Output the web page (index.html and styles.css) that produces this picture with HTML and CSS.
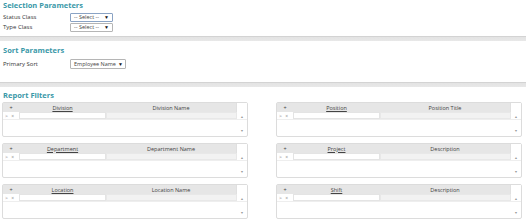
FILE: index.html
```html
<!DOCTYPE html>
<html lang="en">
<head>
  <meta charset="UTF-8" />
  <title>Report Parameters</title>
  <link rel="stylesheet" href="styles.css">
</head>
<body>
  <div class="section sel">
    <h3>Selection Parameters</h3>
    <div class="field">
      <label>Status Class</label>
      <div class="dd focus">-- Select -- <span class="arr">&#9660;</span></div>
    </div>
    <div class="field">
      <label>Type Class</label>
      <div class="dd">-- Select -- <span class="arr">&#9660;</span></div>
    </div>
  </div>
  <div class="band"></div>

  <div class="section sort">
    <h3>Sort Parameters</h3>
    <div class="field">
      <label>Primary Sort</label>
      <div class="dd wide">Employee Name <span class="arr">&#9660;</span></div>
    </div>
  </div>
  <div class="band"></div>

  <div class="section filters">
    <h3>Report Filters</h3>
    <div class="grids">
      <div class="grid">
        <div class="hdr"><span class="c-plus">+</span><span class="c-code"><u>Division</u></span><span class="c-name">Division Name</span><span class="c-sb"></span></div>
        <div class="row"><span class="c-plus">&gt; &#215;</span><span class="c-code in"></span><span class="c-name ro"></span><span class="c-sb up">&#9650;</span></div>
        <div class="rest"><span class="dn">&#9660;</span></div>
      </div>
      <div class="grid">
        <div class="hdr"><span class="c-plus">+</span><span class="c-code"><u>Position</u></span><span class="c-name">Position Title</span><span class="c-sb"></span></div>
        <div class="row"><span class="c-plus">&gt; &#215;</span><span class="c-code in"></span><span class="c-name ro"></span><span class="c-sb up">&#9650;</span></div>
        <div class="rest"><span class="dn">&#9660;</span></div>
      </div>
      <div class="grid">
        <div class="hdr"><span class="c-plus">+</span><span class="c-code"><u>Department</u></span><span class="c-name">Department Name</span><span class="c-sb"></span></div>
        <div class="row"><span class="c-plus">&gt; &#215;</span><span class="c-code in"></span><span class="c-name ro"></span><span class="c-sb up">&#9650;</span></div>
        <div class="rest"><span class="dn">&#9660;</span></div>
      </div>
      <div class="grid">
        <div class="hdr"><span class="c-plus">+</span><span class="c-code"><u>Project</u></span><span class="c-name">Description</span><span class="c-sb"></span></div>
        <div class="row"><span class="c-plus">&gt; &#215;</span><span class="c-code in"></span><span class="c-name ro"></span><span class="c-sb up">&#9650;</span></div>
        <div class="rest"><span class="dn">&#9660;</span></div>
      </div>
      <div class="grid">
        <div class="hdr"><span class="c-plus">+</span><span class="c-code"><u>Location</u></span><span class="c-name">Location Name</span><span class="c-sb"></span></div>
        <div class="row"><span class="c-plus">&gt; &#215;</span><span class="c-code in"></span><span class="c-name ro"></span><span class="c-sb up">&#9650;</span></div>
        <div class="rest"><span class="dn">&#9660;</span></div>
      </div>
      <div class="grid">
        <div class="hdr"><span class="c-plus">+</span><span class="c-code"><u>Shift</u></span><span class="c-name">Description</span><span class="c-sb"></span></div>
        <div class="row"><span class="c-plus">&gt; &#215;</span><span class="c-code in"></span><span class="c-name ro"></span><span class="c-sb up">&#9650;</span></div>
        <div class="rest"><span class="dn">&#9660;</span></div>
      </div>
    </div>
  </div>
</body>
</html>
```

FILE: styles.css
```css
body {
  margin: 0;
  font-family: 'Open Sans', sans-serif;
  font-size: 6px;
  color: #333;
  background: white;
  width: 526px;
  overflow: hidden;
}
h3 {
  margin: 0;
  font-size: 7.5px;
  font-weight: 700;
  color: #3a98a8;
  line-height: 9px;
}
.section {
  padding: 1px 3px 0;
}
.sel {
  height: 35px;
}
.sel h3 {
  margin-bottom: 2px;
}
.sort {
  height: 36px;
  padding-top: 5px;
}
.sort h3 {
  margin-bottom: 4px;
}
.filters {
  padding: 4px 2px 0;
}
.filters h3 {
  margin-left: 1px;
  margin-bottom: 2px;
}
.field {
  display: flex;
  align-items: center;
  height: 10px;
}
.field label {
  width: 67px;
  color: #333;
}
.dd {
  box-sizing: border-box;
  width: 43px;
  height: 9px;
  border: 1px solid #b5b5b5;
  border-radius: 1px;
  padding: 0 3px 0 3px;
  display: flex;
  align-items: center;
  justify-content: space-between;
  white-space: nowrap;
  font-size: 5.5px;
  color: #444;
  background: white;
}
.dd.focus {
  border-color: #8aa3c4;
}
.dd.wide {
  width: 56px;
  height: 10px;
}
.arr {
  font-size: 5px;
  color: #111;
  margin-left: 2px;
}
.band {
  height: 5px;
  background: linear-gradient(#d3d3d3 0, #d3d3d3 1px, #e3e3e3 1px, #e8e8e8 100%);
}
.grids {
  display: grid;
  grid-template-columns: 246px 246px;
  justify-content: space-between;
  row-gap: 6px;
  padding-right: 2px;
}
.grid {
  box-sizing: border-box;
  height: 35px;
  border: 1px solid #dcdcdc;
  border-radius: 2px;
  display: flex;
  flex-direction: column;
  font-size: 5.5px;
}
.hdr, .row {
  display: flex;
}
.hdr {
  height: 9px;
  align-items: stretch;
}
.hdr span {
  background: #e6e6e6;
  display: flex;
  align-items: center;
  justify-content: center;
  color: #444;
}
.hdr .c-sb {
  background: white;
  border-left: 1px solid #e0e0e0;
}
.row {
  height: 7px;
  border-bottom: 1px solid #eee;
}
.c-plus {
  width: 16px;
  flex: none;
}
.row .c-plus {
  font-size: 5px;
  color: #888;
  display: flex;
  align-items: center;
  padding-left: 2px;
  box-sizing: border-box;
  letter-spacing: 1px;
}
.c-code {
  width: 87px;
  flex: none;
}
.c-name {
  flex: 1;
}
.c-sb {
  width: 10px;
  flex: none;
}
.in {
  background: white;
  border: 1px solid #e4e4e4;
  box-sizing: border-box;
}
.ro {
  background: #f2f2f2;
  border: 1px solid #e8e8e8;
  box-sizing: border-box;
}
.up, .dn {
  font-size: 3.5px;
  color: #999;
  display: flex;
  align-items: flex-end;
  justify-content: center;
}
.rest {
  flex: 1;
  display: flex;
  justify-content: flex-end;
}
.rest .dn {
  width: 10px;
  padding-bottom: 3px;
  box-sizing: border-box;
}
```
